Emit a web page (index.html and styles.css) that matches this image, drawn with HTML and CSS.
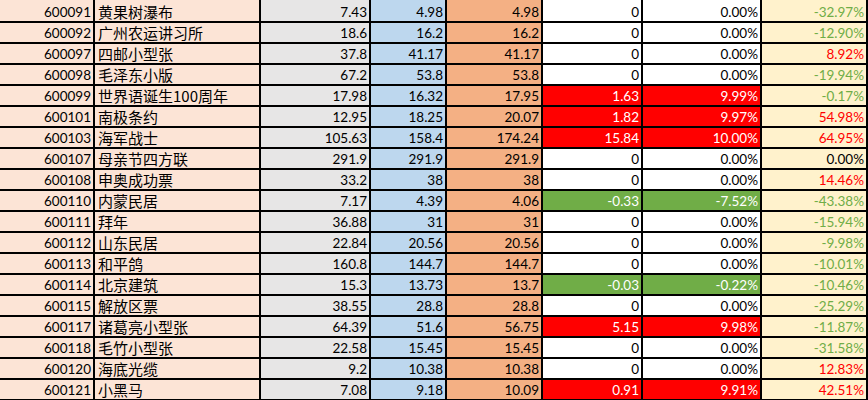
FILE: index.html
```html
<!DOCTYPE html>
<html lang="zh">
<head>
<meta charset="utf-8">
<link rel="stylesheet" href="styles.css">
</head>
<body>
<div class="sheet">
  <div class="row first"><div class="c code">600091</div><div class="c name">黄果树瀑布</div><div class="c n gray">7.43</div><div class="c n blue">4.98</div><div class="c n orange">4.98</div><div class="c n">0</div><div class="c n">0.00%</div><div class="c n yel neg">-32.97%</div></div>
  <div class="row"><div class="c code">600092</div><div class="c name">广州农运讲习所</div><div class="c n gray">18.6</div><div class="c n blue">16.2</div><div class="c n orange">16.2</div><div class="c n">0</div><div class="c n">0.00%</div><div class="c n yel neg">-12.90%</div></div>
  <div class="row"><div class="c code">600097</div><div class="c name">四邮小型张</div><div class="c n gray">37.8</div><div class="c n blue">41.17</div><div class="c n orange">41.17</div><div class="c n">0</div><div class="c n">0.00%</div><div class="c n yel pos">8.92%</div></div>
  <div class="row"><div class="c code">600098</div><div class="c name">毛泽东小版</div><div class="c n gray">67.2</div><div class="c n blue">53.8</div><div class="c n orange">53.8</div><div class="c n">0</div><div class="c n">0.00%</div><div class="c n yel neg">-19.94%</div></div>
  <div class="row"><div class="c code">600099</div><div class="c name">世界语诞生100周年</div><div class="c n gray">17.98</div><div class="c n blue">16.32</div><div class="c n orange">17.95</div><div class="c n up">1.63</div><div class="c n up">9.99%</div><div class="c n yel neg">-0.17%</div></div>
  <div class="row"><div class="c code">600101</div><div class="c name">南极条约</div><div class="c n gray">12.95</div><div class="c n blue">18.25</div><div class="c n orange">20.07</div><div class="c n up">1.82</div><div class="c n up">9.97%</div><div class="c n yel pos">54.98%</div></div>
  <div class="row"><div class="c code">600103</div><div class="c name">海军战士</div><div class="c n gray">105.63</div><div class="c n blue">158.4</div><div class="c n orange">174.24</div><div class="c n up">15.84</div><div class="c n up">10.00%</div><div class="c n yel pos">64.95%</div></div>
  <div class="row"><div class="c code">600107</div><div class="c name">母亲节四方联</div><div class="c n gray">291.9</div><div class="c n blue">291.9</div><div class="c n orange">291.9</div><div class="c n">0</div><div class="c n">0.00%</div><div class="c n yel">0.00%</div></div>
  <div class="row"><div class="c code">600108</div><div class="c name">申奥成功票</div><div class="c n gray">33.2</div><div class="c n blue">38</div><div class="c n orange">38</div><div class="c n">0</div><div class="c n">0.00%</div><div class="c n yel pos">14.46%</div></div>
  <div class="row"><div class="c code">600110</div><div class="c name">内蒙民居</div><div class="c n gray">7.17</div><div class="c n blue">4.39</div><div class="c n orange">4.06</div><div class="c n down">-0.33</div><div class="c n down">-7.52%</div><div class="c n yel neg">-43.38%</div></div>
  <div class="row"><div class="c code">600111</div><div class="c name">拜年</div><div class="c n gray">36.88</div><div class="c n blue">31</div><div class="c n orange">31</div><div class="c n">0</div><div class="c n">0.00%</div><div class="c n yel neg">-15.94%</div></div>
  <div class="row"><div class="c code">600112</div><div class="c name">山东民居</div><div class="c n gray">22.84</div><div class="c n blue">20.56</div><div class="c n orange">20.56</div><div class="c n">0</div><div class="c n">0.00%</div><div class="c n yel neg">-9.98%</div></div>
  <div class="row"><div class="c code">600113</div><div class="c name">和平鸽</div><div class="c n gray">160.8</div><div class="c n blue">144.7</div><div class="c n orange">144.7</div><div class="c n">0</div><div class="c n">0.00%</div><div class="c n yel neg">-10.01%</div></div>
  <div class="row"><div class="c code">600114</div><div class="c name">北京建筑</div><div class="c n gray">15.3</div><div class="c n blue">13.73</div><div class="c n orange">13.7</div><div class="c n down">-0.03</div><div class="c n down">-0.22%</div><div class="c n yel neg">-10.46%</div></div>
  <div class="row"><div class="c code">600115</div><div class="c name">解放区票</div><div class="c n gray">38.55</div><div class="c n blue">28.8</div><div class="c n orange">28.8</div><div class="c n">0</div><div class="c n">0.00%</div><div class="c n yel neg">-25.29%</div></div>
  <div class="row"><div class="c code">600117</div><div class="c name">诸葛亮小型张</div><div class="c n gray">64.39</div><div class="c n blue">51.6</div><div class="c n orange">56.75</div><div class="c n up">5.15</div><div class="c n up">9.98%</div><div class="c n yel neg">-11.87%</div></div>
  <div class="row"><div class="c code">600118</div><div class="c name">毛竹小型张</div><div class="c n gray">22.58</div><div class="c n blue">15.45</div><div class="c n orange">15.45</div><div class="c n">0</div><div class="c n">0.00%</div><div class="c n yel neg">-31.58%</div></div>
  <div class="row"><div class="c code">600120</div><div class="c name">海底光缆</div><div class="c n gray">9.2</div><div class="c n blue">10.38</div><div class="c n orange">10.38</div><div class="c n">0</div><div class="c n">0.00%</div><div class="c n yel pos">12.83%</div></div>
  <div class="row"><div class="c code">600121</div><div class="c name">小黑马</div><div class="c n gray">7.08</div><div class="c n blue">9.18</div><div class="c n orange">10.09</div><div class="c n up">0.91</div><div class="c n up">9.91%</div><div class="c n yel pos">42.51%</div></div>
</div>
</body>
</html>
```
FILE: styles.css
```css
html, body {
  margin: 0;
  padding: 0;
  background: #fff;
}
body {
  width: 868px;
  height: 400px;
  overflow: hidden;
}
.sheet {
  display: flex;
  flex-direction: column;
  gap: 2px;
  background: #000;
  width: 866px;
  padding: 0 2px 2px 0;
  font-family: Lato, "Noto Sans CJK SC", sans-serif;
  font-size: 13.5px;
  color: #000;
}
.row {
  display: grid;
  grid-template-columns: 93px 164px 108px 74px 94px 98px 117px 104px;
  gap: 2px;
  height: 19px;
}
.row.first {
  height: 21px;
}
.c {
  background: #fff;
  display: flex;
  align-items: center;
  padding: 1px 2px 0 2px;
  line-height: 18px;
  white-space: nowrap;
  overflow: hidden;
}
.first .c {
  padding-top: 3px;
}
.code {
  background: #fce4d6;
  justify-content: flex-end;
}
.name {
  background: #fce4d6;
  justify-content: flex-start;
  font-family: "Noto Sans CJK SC", sans-serif;
  font-size: 15px;
  padding-left: 3px;
}
.n {
  justify-content: flex-end;
}
.gray { background: #e7e6e6; }
.blue { background: #bdd7ee; }
.orange { background: #f4b084; }
.yel { background: #fff2cc; }
.up { background: #ff0000; color: #fff; }
.down { background: #70ad47; color: #fff; }
.neg { color: #70ad47; }
.pos { color: #ff0000; }
```
